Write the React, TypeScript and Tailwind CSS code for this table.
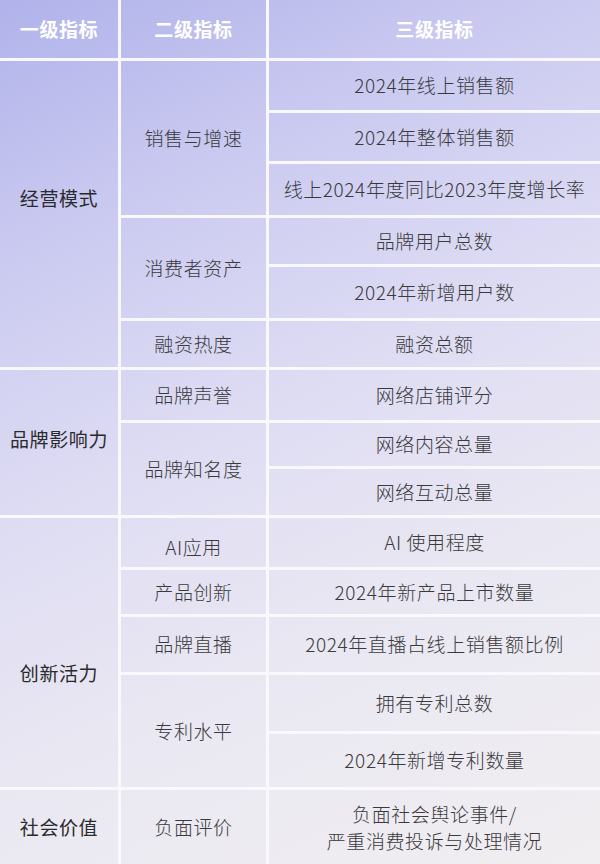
import React from 'react';

const bg =
  'bg-fixed bg-[linear-gradient(155deg,#b1b2ea_0%,#cbcbf1_24%,#dedcf3_46%,#e9e7f2_68%,#f1eef1_100%)]';

function Cell({ className = '', children }: { className?: string; children?: React.ReactNode }) {
  return (
    <div className={`flex items-center justify-center text-center ${bg} ${className}`}>
      {children}
    </div>
  );
}

export default function App() {
  return (
    <div
      className="w-[600px] h-[864px] overflow-hidden bg-[#f9f9fd] text-[19px] tracking-[0.6px] text-[#3a3a3c] font-light"
      style={{ fontFamily: '"Noto Sans CJK SC", "Noto Sans", sans-serif' }}
    >
      <div className="grid grid-cols-[118px_145px_1fr] grid-rows-[58px_49px_48px_51px_46px_51px_46px_50px_43px_46px_49px_44px_55px_56px_53px_74px] gap-[3px] h-full">
        {/* header */}
        <Cell className="font-bold text-white">一级指标</Cell>
        <Cell className="font-bold text-white">二级指标</Cell>
        <Cell className="font-bold text-white">三级指标</Cell>

        {/* 一级 */}
        <Cell className="col-start-1 row-start-2 row-span-6 pb-[32px] font-normal text-[#2a2a2c]">经营模式</Cell>
        <Cell className="col-start-1 row-start-8 row-span-3 pb-[6px] font-normal text-[#2a2a2c]">品牌影响力</Cell>
        <Cell className="col-start-1 row-start-11 row-span-5 pt-[42px] font-normal text-[#2a2a2c]">创新活力</Cell>
        <Cell className="col-start-1 row-start-16 font-normal text-[#2a2a2c]">社会价值</Cell>

        {/* 二级 */}
        <Cell className="col-start-2 row-start-2 row-span-3">销售与增速</Cell>
        <Cell className="col-start-2 row-start-5 row-span-2">消费者资产</Cell>
        <Cell className="col-start-2 row-start-7">融资热度</Cell>
        <Cell className="col-start-2 row-start-8">品牌声誉</Cell>
        <Cell className="col-start-2 row-start-9 row-span-2">品牌知名度</Cell>
        <Cell className="col-start-2 row-start-11 pt-[10px]">AI应用</Cell>
        <Cell className="col-start-2 row-start-12">产品创新</Cell>
        <Cell className="col-start-2 row-start-13">品牌直播</Cell>
        <Cell className="col-start-2 row-start-14 row-span-2">专利水平</Cell>
        <Cell className="col-start-2 row-start-16">负面评价</Cell>

        {/* 三级 */}
        <Cell className="col-start-3 row-start-2">2024年线上销售额</Cell>
        <Cell className="col-start-3 row-start-3">2024年整体销售额</Cell>
        <Cell className="col-start-3 row-start-4">线上2024年度同比2023年度增长率</Cell>
        <Cell className="col-start-3 row-start-5">品牌用户总数</Cell>
        <Cell className="col-start-3 row-start-6">2024年新增用户数</Cell>
        <Cell className="col-start-3 row-start-7">融资总额</Cell>
        <Cell className="col-start-3 row-start-8">网络店铺评分</Cell>
        <Cell className="col-start-3 row-start-9">网络内容总量</Cell>
        <Cell className="col-start-3 row-start-10">网络互动总量</Cell>
        <Cell className="col-start-3 row-start-11">AI 使用程度</Cell>
        <Cell className="col-start-3 row-start-12">2024年新产品上市数量</Cell>
        <Cell className="col-start-3 row-start-13">2024年直播占线上销售额比例</Cell>
        <Cell className="col-start-3 row-start-14">拥有专利总数</Cell>
        <Cell className="col-start-3 row-start-15">2024年新增专利数量</Cell>
        <Cell className="col-start-3 row-start-16 flex-col leading-[27px]">
          <span>负面社会舆论事件/</span>
          <span>严重消费投诉与处理情况</span>
        </Cell>
      </div>
    </div>
  );
}
